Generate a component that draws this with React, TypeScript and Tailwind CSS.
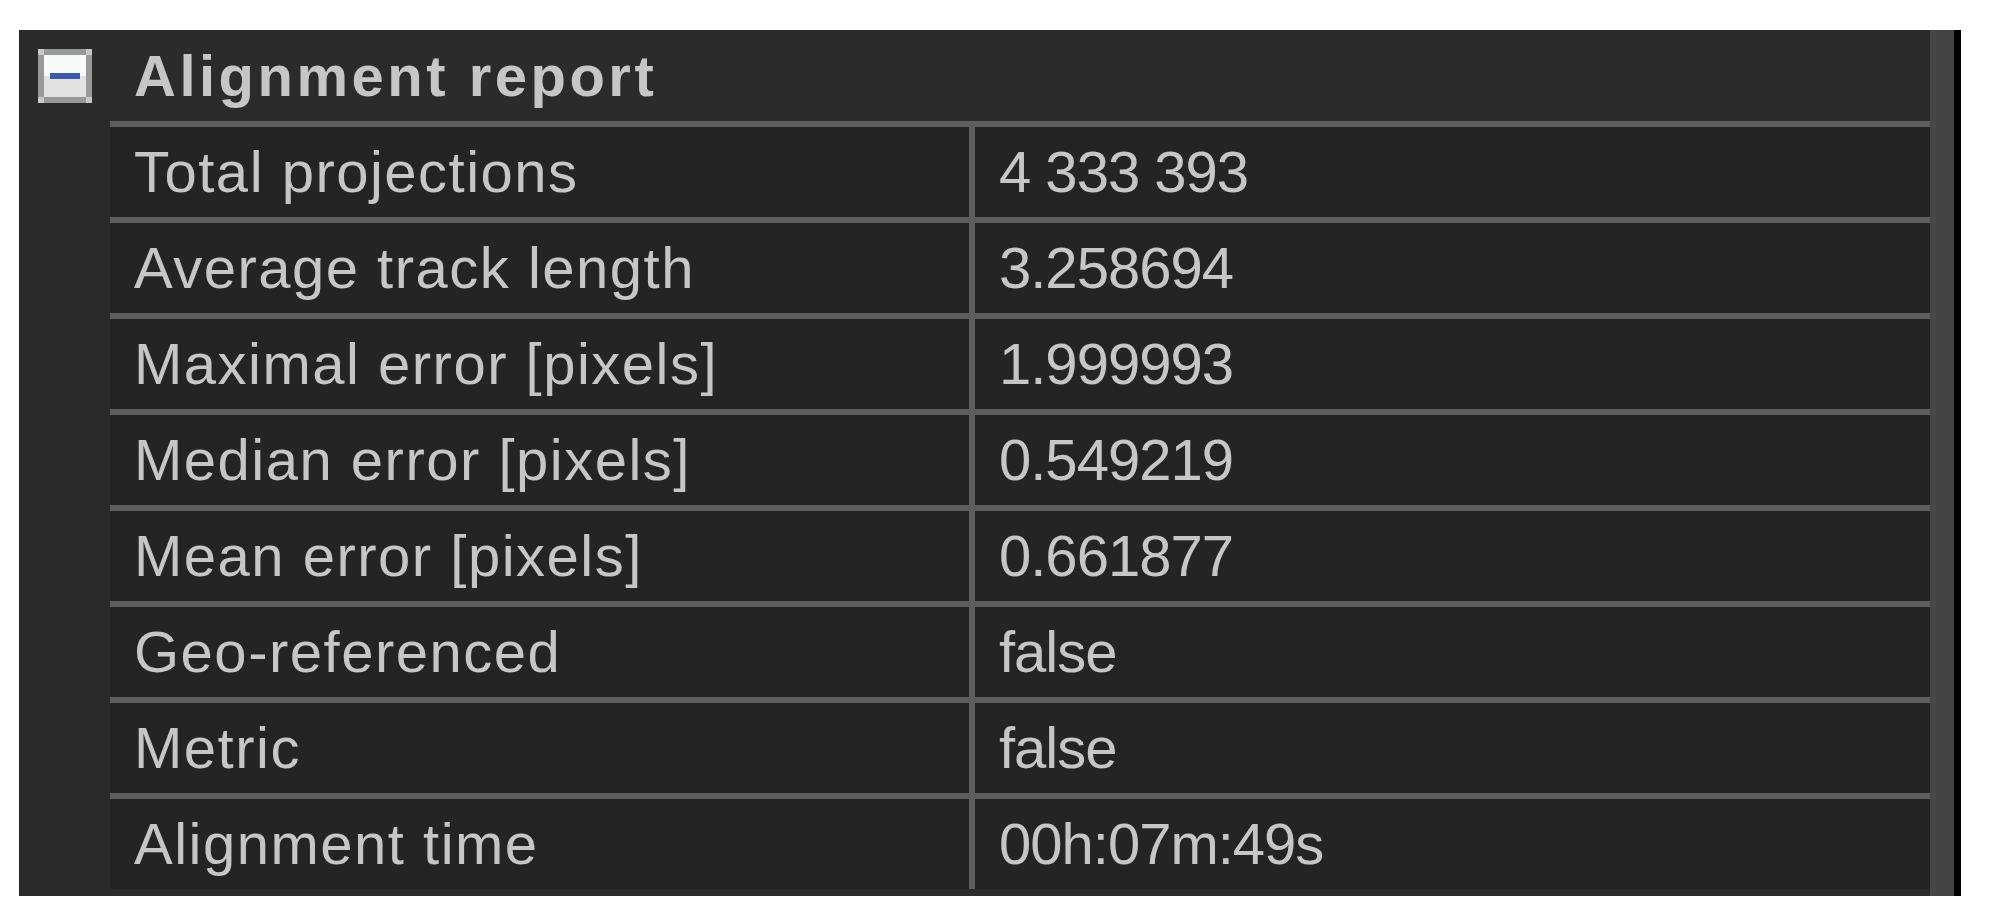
import React from "react";

type Row = { label: string; value: string };

const rows: Row[] = [
  { label: "Total projections", value: "4 333 393" },
  { label: "Average track length", value: "3.258694" },
  { label: "Maximal error [pixels]", value: "1.999993" },
  { label: "Median error [pixels]", value: "0.549219" },
  { label: "Mean error [pixels]", value: "0.661877" },
  { label: "Geo-referenced", value: "false" },
  { label: "Metric", value: "false" },
  { label: "Alignment time", value: "00h:07m:49s" },
];

function CollapseBox() {
  return (
    <div className="relative h-[54px] w-[54px] border-[6px] border-[#999999]">
      <div className="h-1/2 bg-[#f8f9f9]" />
      <div className="h-1/2 bg-[#e2e2e2]" />
      <div className="absolute left-[6px] top-[18px] h-[6px] w-[30px] bg-[#3d5aa8]" />
      <span className="absolute -left-[6px] -top-[6px] h-[6px] w-[6px] bg-[#c8c8c8]" />
      <span className="absolute -right-[6px] -top-[6px] h-[6px] w-[6px] bg-[#c8c8c8]" />
      <span className="absolute -bottom-[6px] -left-[6px] h-[6px] w-[6px] bg-[#c8c8c8]" />
      <span className="absolute -bottom-[6px] -right-[6px] h-[6px] w-[6px] bg-[#c8c8c8]" />
    </div>
  );
}

export default function App() {
  return (
    <main className="min-h-[922px] bg-white pl-[19px] pt-[30px] font-['Liberation_Sans',Arial,sans-serif] text-[58px] leading-none text-[#c6c6c6]">
      <div className="flex h-[866px] w-[1942px] bg-[#2b2b2b]">
        <div className="flex-1 pb-[7px]">
          <div className="flex h-[91px] items-center">
            <div className="flex w-[91px] justify-start pl-[19px]">
              <CollapseBox />
            </div>
            <h1 className="pl-[24px] font-bold tracking-[3.5px]">Alignment report</h1>
          </div>
          <div className="ml-[91px] flex flex-col gap-[6px] bg-[#5e5e5e] pt-[6px]">
            {rows.map((r) => (
              <div key={r.label} className="grid grid-cols-[859px_1fr] gap-x-[6px]">
                <div className="flex h-[90px] items-center bg-[#242424] pl-[24px] tracking-[1.5px]">
                  {r.label}
                </div>
                <div className="flex h-[90px] items-center bg-[#242424] pl-[24px] tracking-[-1px]">
                  {r.value}
                </div>
              </div>
            ))}
          </div>
        </div>
        <div className="w-[6px] bg-[#474747]" />
        <div className="w-[18px] bg-[#434343]" />
        <div className="w-[7px] bg-black" />
      </div>
    </main>
  );
}
